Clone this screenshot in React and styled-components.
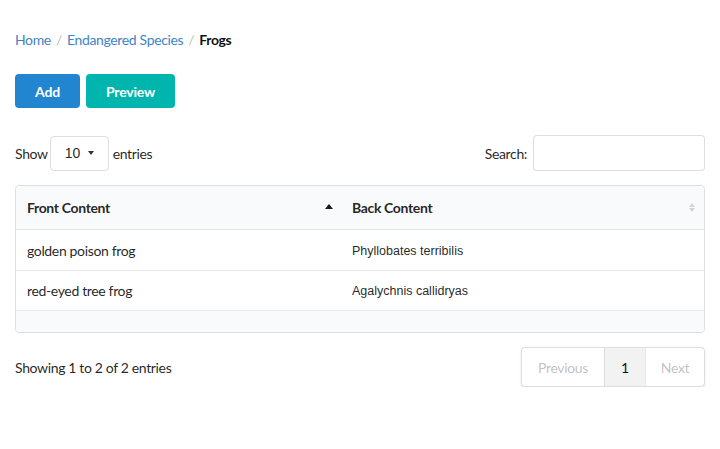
import React from "react";
import styled, { createGlobalStyle } from "styled-components";

const Global = createGlobalStyle`
  html, body { margin: 0; padding: 0; background: #fff; }
  body {
    font-family: Lato, "Helvetica Neue", Arial, sans-serif;
    font-size: 14px;
    letter-spacing: -0.35px;
    color: rgba(0,0,0,.87);
  }
  * { box-sizing: border-box; }
`;

const Page = styled.div`
  padding: 30px 15px 0 15px;
  width: 720px;
`;

const Breadcrumb = styled.div`
  display: flex;
  align-items: center;
  font-size: 14px;
  line-height: 20px;
  height: 20px;
`;

const Crumb = styled.a`
  color: #4183c4;
  text-decoration: none;
`;

const Divider = styled.span`
  color: rgba(0,0,0,.3);
  margin: 0 5px 0 5px;
`;

const Active = styled.span`
  font-weight: 700;
  color: rgba(0,0,0,.95);
`;

const Toolbar = styled.div`
  display: flex;
  gap: 6px;
  margin-top: 24px;
`;

const Button = styled.button`
  height: 34px;
  width: ${p => p.$w}px;
  border: none;
  border-radius: 4px;
  background: ${p => p.$bg};
  color: #fff;
  font-family: Lato, sans-serif;
  font-weight: 700;
  font-size: 14px;
  letter-spacing: -0.2px;
  padding: 0;
  cursor: pointer;
`;

const Controls = styled.div`
  display: flex;
  justify-content: space-between;
  align-items: center;
  margin-top: 27px;
  height: 36px;
`;

const Inline = styled.label`
  display: flex;
  align-items: center;
  gap: 6px;
`;

const Select = styled.div`
  width: 59px;
  height: 35px;
  border: 1px solid rgba(34,36,38,.15);
  border-radius: 4px;
  display: flex;
  align-items: center;
  padding-left: 14px;
  gap: 8px;
  font-family: "Liberation Sans", Arial, sans-serif;
  font-size: 14px;
  letter-spacing: 0;
  color: rgba(0,0,0,.87);
  margin-left: -4px;
  margin-right: -2px;
`;

const Caret = styled.span`
  width: 0;
  height: 0;
  border-left: 3.5px solid transparent;
  border-right: 3.5px solid transparent;
  border-top: 4px solid rgba(0,0,0,.8);
`;

const SearchInput = styled.input`
  width: 172px;
  height: 36px;
  border: 1px solid rgba(34,36,38,.15);
  border-radius: 4px;
`;

const Table = styled.table`
  margin-top: 14px;
  width: 690px;
  border: 1px solid rgba(34,36,38,.15);
  border-radius: 4px;
  border-collapse: separate;
  border-spacing: 0;
  overflow: hidden;
`;

const Th = styled.th`
  background: #f9fafb;
  height: 44px;
  text-align: left;
  font-weight: 700;
  padding: 0 11px;
  position: relative;
  border-bottom: 1px solid rgba(34,36,38,.1);
  width: ${p => p.$w}px;
`;

const SortUp = styled.span`
  position: absolute;
  right: 8px;
  top: 18px;
  width: 0;
  height: 0;
  border-left: 4px solid transparent;
  border-right: 4px solid transparent;
  border-bottom: 5px solid rgba(0,0,0,.9);
`;

const SortBoth = styled.span`
  position: absolute;
  right: 9px;
  top: 17px;
  display: flex;
  flex-direction: column;
  gap: 1px;
  &::before, &::after {
    content: "";
    width: 0;
    height: 0;
    border-left: 3px solid transparent;
    border-right: 3px solid transparent;
  }
  &::before { border-bottom: 4px solid rgba(0,0,0,.15); }
  &::after { border-top: 4px solid rgba(0,0,0,.15); }
`;

const Td = styled.td`
  height: ${p => p.$h}px;
  padding: 0 11px;
  padding-top: ${p => (p.$alt ? 1 : 0)}px;
  border-bottom: 1px solid rgba(34,36,38,.1);
  font-family: ${p => (p.$alt ? `"Liberation Sans", Arial, sans-serif` : `Lato, sans-serif`)};
  font-size: ${p => (p.$alt ? 12.5 : 14)}px;
  letter-spacing: ${p => (p.$alt ? 0 : -0.35)}px;
`;

const FootCell = styled.td`
  background: #f9fafb;
  height: 21px;
`;

const Bottom = styled.div`
  display: flex;
  justify-content: space-between;
  align-items: center;
  margin-top: 14px;
`;

const Pagination = styled.div`
  display: flex;
  border: 1px solid rgba(34,36,38,.15);
  border-radius: 4px;
  box-shadow: 0 1px 2px 0 rgba(34,36,38,.15);
  height: 40px;
  overflow: hidden;
`;

const PageItem = styled.div`
  width: ${p => p.$w}px;
  display: flex;
  align-items: center;
  justify-content: center;
  color: ${p => (p.$disabled ? "rgba(40,40,40,.3)" : "rgba(0,0,0,.95)")};
  background: ${p => (p.$active ? "rgba(0,0,0,.05)" : "transparent")};
  & + & { border-left: 1px solid rgba(34,36,38,.1); }
`;

const rows = [
  { front: "golden poison frog", back: "Phyllobates terribilis", h: 41 },
  { front: "red-eyed tree frog", back: "Agalychnis callidryas", h: 40 },
];

export default function App() {
  return (
    <>
      <Global />
      <Page>
        <Breadcrumb>
          <Crumb href="#">Home</Crumb>
          <Divider>/</Divider>
          <Crumb href="#">Endangered Species</Crumb>
          <Divider>/</Divider>
          <Active>Frogs</Active>
        </Breadcrumb>
        <Toolbar>
          <Button $w={65} $bg="#2185d0">Add</Button>
          <Button $w={89} $bg="#00b5ad">Preview</Button>
        </Toolbar>
        <Controls>
          <Inline>
            Show
            <Select>
              10 <Caret />
            </Select>
            entries
          </Inline>
          <Inline>
            Search:
            <SearchInput />
          </Inline>
        </Controls>
        <Table>
          <thead>
            <tr>
              <Th $w={325}>
                Front Content
                <SortUp />
              </Th>
              <Th>
                Back Content
                <SortBoth />
              </Th>
            </tr>
          </thead>
          <tbody>
            {rows.map(r => (
              <tr key={r.front}>
                <Td $h={r.h}>{r.front}</Td>
                <Td $h={r.h} $alt>{r.back}</Td>
              </tr>
            ))}
          </tbody>
          <tfoot>
            <tr>
              <FootCell colSpan={2} />
            </tr>
          </tfoot>
        </Table>
        <Bottom>
          <span>Showing 1 to 2 of 2 entries</span>
          <Pagination>
            <PageItem $w={82} $disabled>Previous</PageItem>
            <PageItem $w={41} $active>1</PageItem>
            <PageItem $w={59} $disabled>Next</PageItem>
          </Pagination>
        </Bottom>
      </Page>
    </>
  );
}
